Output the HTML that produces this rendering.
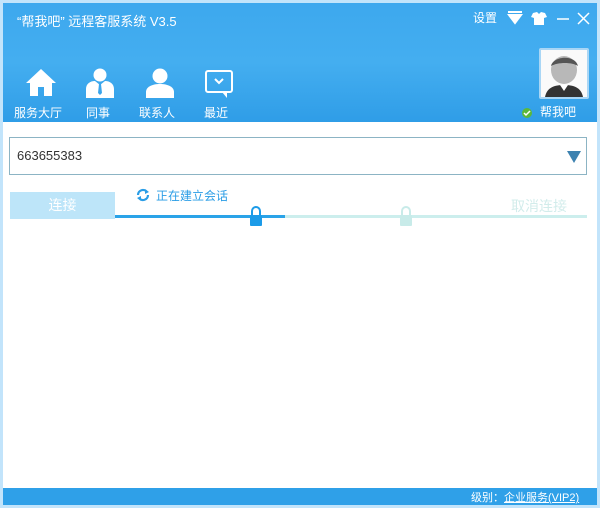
<!DOCTYPE html>
<html><head><meta charset="utf-8"><style>
*{margin:0;padding:0;box-sizing:border-box}
body{width:600px;height:508px;background:#c2e4fb;font-family:"Liberation Sans","Noto Sans CJK SC",sans-serif;position:relative;overflow:hidden}
.win{position:absolute;left:3px;top:3px;width:594px;height:502px;background:#fff}
.hdr{position:absolute;left:0;top:0;width:594px;height:119px;background:linear-gradient(180deg,#3da8ee 0%,#44aef0 50%,#2f9de7 100%)}
.t{position:absolute;color:#fff;font-size:13px}
.lbl{position:absolute;top:101px;color:#fff;font-size:12px}
.foot{position:absolute;left:0;top:485px;width:594px;height:17px;background:#2fa0e8;color:#fff;font-size:11px}
</style></head><body>
<div class="win">
<div class="hdr">
<div class="t" style="left:14px;top:8px;font-size:13px">“帮我吧” 远程客服系统 V3.5</div>
<div class="t" style="left:470px;top:6px;font-size:12px">设置</div>
<svg style="position:absolute;left:503px;top:8px" width="90" height="16">
<path d="M2 1h14M3 4h12l-6 8z" stroke="#fff" stroke-width="2" fill="#fff"/>
<path d="M27 2l4-1 2 2 2-2 4 1 2 4-3 1v7h-10v-7l-3-1z" fill="#fff"/>
<path d="M51 8h12" stroke="#fff" stroke-width="1.5"/>
<path d="M72 2l11 11M83 2l-11 11" stroke="#fff" stroke-width="1.5"/>
</svg>
<svg style="position:absolute;left:22px;top:64px" width="32" height="32"><path d="M16 2L1 16h4v13h8v-9h6v9h8V16h4z" fill="#fff"/></svg>
<svg style="position:absolute;left:81px;top:65px" width="32" height="32"><circle cx="16" cy="7" r="6.5" fill="#fff"/><path d="M2 30v-9c0-5 4-8 9-8l5 4 5-4c5 0 9 3 9 8v9z" fill="#fff"/><path d="M15 16h2l1 9-2 2-2-2z" fill="#3aa5ec"/></svg>
<svg style="position:absolute;left:141px;top:65px" width="32" height="32"><circle cx="16" cy="8" r="7.5" fill="#fff"/><path d="M2 30v-6c0-5 6-8 14-8s14 3 14 8v6z" fill="#fff"/></svg>
<svg style="position:absolute;left:201px;top:65px" width="32" height="32"><rect x="2" y="3" width="26" height="21" rx="2" fill="none" stroke="#fff" stroke-width="2"/><path d="M18 24l5 6v-6z" fill="#fff"/><path d="M11 11l4 4 4-4" stroke="#fff" stroke-width="2" fill="none"/></svg>
<div class="lbl" style="left:11px">服务大厅</div>
<div class="lbl" style="left:83px">同事</div>
<div class="lbl" style="left:136px">联系人</div>
<div class="lbl" style="left:201px">最近</div>
<div style="position:absolute;left:536px;top:45px;width:50px;height:51px;border:2px solid #a9d6f5;background:#fafafa;border-radius:2px">
<svg width="46" height="47"><ellipse cx="23" cy="20" rx="13" ry="14" fill="#b8b8b8"/><path d="M10 16c2-10 24-12 27 0-6-4-20-4-27 0z" fill="#555"/><path d="M4 47c2-10 10-12 19-12s17 2 19 12z" fill="#333"/><path d="M19 35l4 6 4-6z" fill="#fff"/></svg></div>
<svg style="position:absolute;left:518px;top:104px" width="12" height="12"><circle cx="6" cy="6" r="5" fill="#5bb83a"/><path d="M3 6l2 2 4-4" stroke="#fff" stroke-width="1.5" fill="none"/></svg>
<div class="t" style="left:537px;top:100px;font-size:12px">帮我吧</div>
</div>
<div style="position:absolute;left:6px;top:134px;width:578px;height:38px;border:1px solid #8cb4c4;font-size:13px;color:#333;padding:10px 0 0 7px">663655383</div>
<svg style="position:absolute;left:564px;top:148px" width="14" height="12"><path d="M0 0h14l-7 12z" fill="#3d82b0"/></svg>
<div style="position:absolute;left:7px;top:189px;width:105px;height:27px;background:#bde5f9;color:#fff;font-size:14px;text-align:center;line-height:27px">连接</div>
<svg style="position:absolute;left:133px;top:185px" width="14" height="14"><path d="M2 7a5 5 0 0 1 9-3M12 7a5 5 0 0 1-9 3" stroke="#2a9de6" stroke-width="2.2" fill="none"/><path d="M9 1l4 3-4 2zM5 13l-4-3 4-2z" fill="#2a9de6"/></svg>
<div style="position:absolute;left:153px;top:184px;color:#2a9de6;font-size:12px">正在建立会话</div>
<div style="position:absolute;left:112px;top:212px;width:170px;height:3px;background:#2aa3e8"></div>
<div style="position:absolute;left:282px;top:212px;width:302px;height:3px;background:#cceeed"></div>
<svg style="position:absolute;left:246px;top:202px" width="14" height="22"><path d="M3 10V6a4 4 0 0 1 8 0v4" stroke="#1c9be8" stroke-width="2" fill="none"/><rect x="1" y="10" width="12" height="11" rx="1" fill="#1c9be8"/></svg>
<svg style="position:absolute;left:396px;top:202px" width="14" height="22"><path d="M3 10V6a4 4 0 0 1 8 0v4" stroke="#c8ebe9" stroke-width="2" fill="none"/><rect x="1" y="10" width="12" height="11" rx="1" fill="#c8ebe9"/></svg>
<div style="position:absolute;left:508px;top:193px;color:#d2eceb;font-size:14px">取消连接</div>
<div class="foot"><span style="position:absolute;left:468px;top:1px">级别：<u>企业服务(VIP2)</u></span></div>
</div>
</body></html>
